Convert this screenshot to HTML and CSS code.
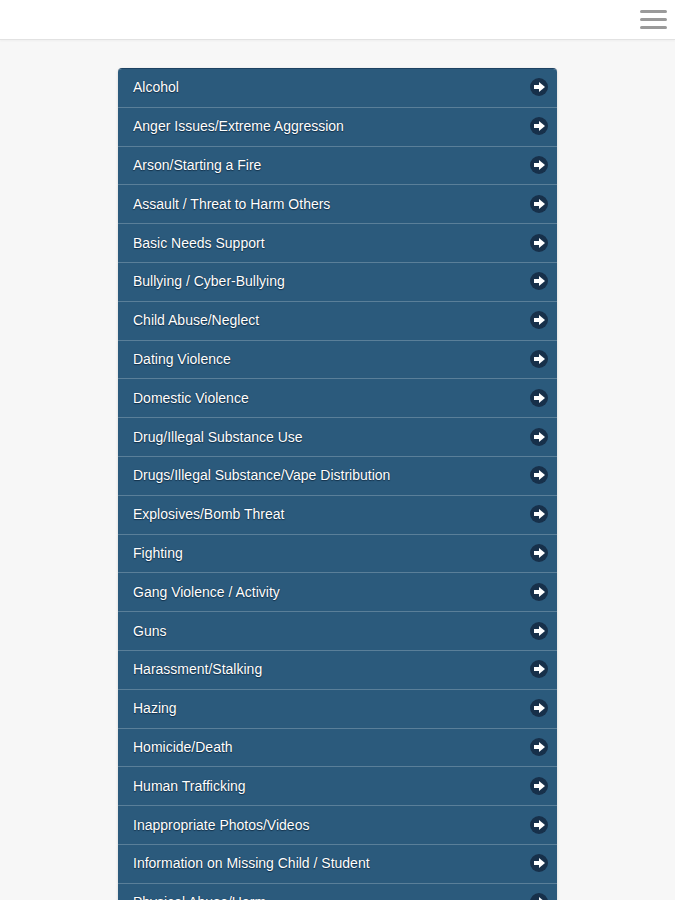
FILE: index.html
```html
<!DOCTYPE html>
<html lang="en">
<head>
  <meta charset="UTF-8">
  <meta name="viewport" content="width=device-width, initial-scale=1.0">
  <title>Report Categories</title>
  <link rel="stylesheet" href="styles.css">
</head>
<body>
  <div class="header">
    <div class="menu-btn">
      <span></span><span></span><span></span>
    </div>
  </div>

  <div class="content">
    <ul class="list">
      <li><a href="#">Alcohol<i class="arrow"></i></a></li>
      <li><a href="#">Anger Issues/Extreme Aggression<i class="arrow"></i></a></li>
      <li><a href="#">Arson/Starting a Fire<i class="arrow"></i></a></li>
      <li><a href="#">Assault / Threat to Harm Others<i class="arrow"></i></a></li>
      <li><a href="#">Basic Needs Support<i class="arrow"></i></a></li>
      <li><a href="#">Bullying / Cyber-Bullying<i class="arrow"></i></a></li>
      <li><a href="#">Child Abuse/Neglect<i class="arrow"></i></a></li>
      <li><a href="#">Dating Violence<i class="arrow"></i></a></li>
      <li><a href="#">Domestic Violence<i class="arrow"></i></a></li>
      <li><a href="#">Drug/Illegal Substance Use<i class="arrow"></i></a></li>
      <li><a href="#">Drugs/Illegal Substance/Vape Distribution<i class="arrow"></i></a></li>
      <li><a href="#">Explosives/Bomb Threat<i class="arrow"></i></a></li>
      <li><a href="#">Fighting<i class="arrow"></i></a></li>
      <li><a href="#">Gang Violence / Activity<i class="arrow"></i></a></li>
      <li><a href="#">Guns<i class="arrow"></i></a></li>
      <li><a href="#">Harassment/Stalking<i class="arrow"></i></a></li>
      <li><a href="#">Hazing<i class="arrow"></i></a></li>
      <li><a href="#">Homicide/Death<i class="arrow"></i></a></li>
      <li><a href="#">Human Trafficking<i class="arrow"></i></a></li>
      <li><a href="#">Inappropriate Photos/Videos<i class="arrow"></i></a></li>
      <li><a href="#">Information on Missing Child / Student<i class="arrow"></i></a></li>
      <li><a href="#">Physical Abuse/Harm<i class="arrow"></i></a></li>
    </ul>
  </div>
</body>
</html>
```

FILE: styles.css
```css
html, body {
  margin: 0;
  padding: 0;
  background: #f7f7f7;
  font-family: 'Liberation Sans', Arial, sans-serif;
}

.header {
  height: 39px;
  background: #fff;
  border-bottom: 1px solid #e2e2e2;
  box-shadow: 0 1px 2px rgba(0, 0, 0, 0.04);
  display: flex;
  justify-content: flex-end;
  align-items: flex-start;
}

.menu-btn {
  width: 27px;
  margin: 10px 8px 0 0;
  display: flex;
  flex-direction: column;
  gap: 5px;
}

.menu-btn span {
  display: block;
  height: 3px;
  border-radius: 2px;
  background: #9a9a9a;
}

.content {
  padding-top: 28px;
}

.list {
  list-style: none;
  margin: 0 auto;
  padding: 0;
  width: 439px;
  border-radius: 4px 4px 0 0;
  overflow: hidden;
  border-top: 1px solid #1d4262;
  box-shadow: 0 1px 3px rgba(0, 0, 0, 0.15);
}

.list li {
  background: #2b5a7c;
  border-bottom: 1px solid #5a7f99;
}

.list a {
  display: flex;
  align-items: center;
  justify-content: space-between;
  box-sizing: border-box;
  height: 37.8px;
  padding: 0 9px 1px 15px;
  color: #fff;
  text-decoration: none;
  font-size: 14px;
  text-shadow: 0 1px 1px #14314a, 0 0 1px #14314a;
}

.arrow {
  width: 18px;
  height: 18px;
  border-radius: 50%;
  background: #17304a;
  position: relative;
  flex-shrink: 0;
}

.arrow::before {
  content: "";
  position: absolute;
  left: 4px;
  top: 7px;
  width: 6px;
  height: 4px;
  background: #fff;
}

.arrow::after {
  content: "";
  position: absolute;
  left: 9px;
  top: 4px;
  border-left: 6px solid #fff;
  border-top: 5px solid transparent;
  border-bottom: 5px solid transparent;
}
```
